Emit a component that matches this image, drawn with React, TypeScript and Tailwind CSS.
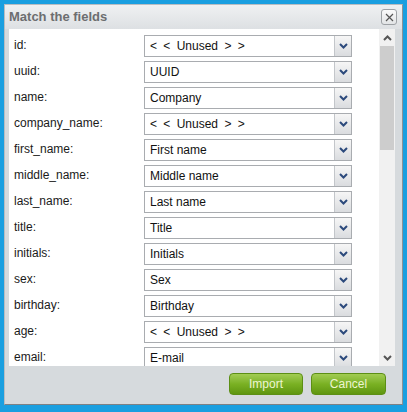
import React from "react";

type Row = { label: string; value: string };

const rows: Row[] = [
  { label: "id:", value: "< < Unused > >" },
  { label: "uuid:", value: "UUID" },
  { label: "name:", value: "Company" },
  { label: "company_name:", value: "< < Unused > >" },
  { label: "first_name:", value: "First name" },
  { label: "middle_name:", value: "Middle name" },
  { label: "last_name:", value: "Last name" },
  { label: "title:", value: "Title" },
  { label: "initials:", value: "Initials" },
  { label: "sex:", value: "Sex" },
  { label: "birthday:", value: "Birthday" },
  { label: "age:", value: "< < Unused > >" },
  { label: "email:", value: "E-mail" },
];

const Chevron = ({ up = false, color }: { up?: boolean; color: string }) => (
  <svg width="9" height="6" viewBox="0 0 9 6" className={up ? "rotate-180" : ""}>
    <path d="M1 1 L4.5 4.5 L8 1" fill="none" stroke={color} strokeWidth="2" />
  </svg>
);

function FieldSelect({ value }: { value: string }) {
  const unused = value.startsWith("<");
  return (
    <div className="flex h-[22px] w-[208px] items-stretch border border-[#a9acb0] bg-white">
      <span
        className={
          unused
            ? "flex flex-1 items-center pl-[5px] text-[12px] text-[#111] [word-spacing:3px]"
            : "flex flex-1 items-center pl-[5px] text-[12px] text-[#111]"
        }
      >
        {value}
      </span>
      <span className="flex w-[17px] items-center justify-center border-l border-[#c3c6ca] bg-gradient-to-b from-[#f6f6f6] to-[#dadcdf]">
        <Chevron color="#2c4a7c" />
      </span>
    </div>
  );
}

export default function App() {
  return (
    <div className="h-[412px] w-[407px] bg-[#1a9fe0] pl-[4px] pt-[4px] font-['Liberation_Sans',Arial,sans-serif]">
      <div className="flex h-[401px] w-[399px] flex-col border border-[#b9bdc1] border-r-[#8e9296] border-b-[#7d8185] bg-[#d6dadd]">
        <div className="flex h-[24px] items-center justify-between bg-gradient-to-b from-[#eff1f2] to-[#dde0e3] pl-[4px] pr-[5px]">
          <h1 className="text-[13px] font-bold text-[#6c6e70]">Match the fields</h1>
          <button
            type="button"
            className="flex h-[16px] w-[16px] items-center justify-center rounded-[3px] border border-[#9da1a5] bg-gradient-to-b from-[#fafafa] to-[#e2e4e6]"
          >
            <svg width="9" height="9" viewBox="0 0 9 9">
              <path d="M1 1 L8 8 M8 1 L1 8" stroke="#555" strokeWidth="1.2" />
            </svg>
          </button>
        </div>

        <div className="ml-[4px] flex h-[337px] w-[386px] overflow-hidden bg-white">
          <div className="flex flex-1 flex-col gap-[4px] pl-[5px] pt-[6px]">
            {rows.map((row) => (
              <div key={row.label} className="flex shrink-0 items-center">
                <span className="w-[130px] pb-[2px] text-[12px] text-[#1a1a1a]">{row.label}</span>
                <FieldSelect value={row.value} />
              </div>
            ))}
          </div>
          <div className="flex w-[16px] shrink-0 flex-col bg-[#f1f1f1]">
            <div className="flex h-[17px] items-center justify-center">
              <Chevron up color="#555" />
            </div>
            <div className="mx-[1px] h-[104px] bg-[#cdcdcd]" />
            <div className="flex-1" />
            <div className="flex h-[17px] items-center justify-center">
              <Chevron color="#555" />
            </div>
          </div>
        </div>

        <div className="flex flex-1 items-center justify-end gap-[8px] pr-[16px] pb-[2px]">
          <button
            type="button"
            className="h-[22px] w-[74px] rounded-[4px] border border-[#5c8f15] bg-gradient-to-b from-[#a2cc52] via-[#7ab123] to-[#5f9610] text-[12px] text-[#eef5d2]"
          >
            Import
          </button>
          <button
            type="button"
            className="h-[22px] w-[75px] rounded-[4px] border border-[#5c8f15] bg-gradient-to-b from-[#a2cc52] via-[#7ab123] to-[#5f9610] text-[12px] text-[#eef5d2]"
          >
            Cancel
          </button>
        </div>
      </div>
    </div>
  );
}
